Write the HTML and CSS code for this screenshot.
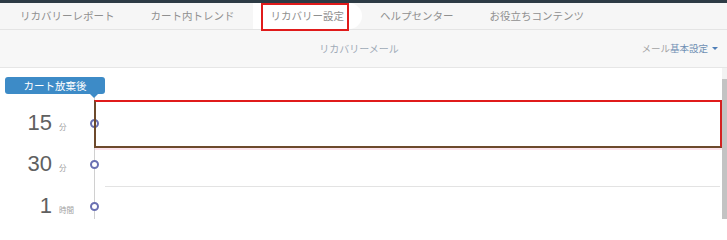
FILE: index.html
```html
<!DOCTYPE html>
<html lang="ja">
<head>
<meta charset="utf-8">
<title>リカバリー設定</title>
<link rel="stylesheet" href="styles.css">
</head>
<body>
<div class="topbar"></div>
<nav class="tabs">
  <a class="tab">リカバリーレポート</a>
  <a class="tab">カート内トレンド</a>
  <a class="tab active"><span class="mark"></span>リカバリー設定</a>
  <a class="tab">ヘルプセンター</a>
  <a class="tab">お役立ちコンテンツ</a>
</nav>
<div class="subbar">
  <div class="subtitle">リカバリーメール</div>
  <div class="settings"><span class="muted">メール</span>基本設定<span class="caret"></span></div>
</div>
<div class="content">
  <main class="main">
    <div class="badge">カート放棄後</div>
    <div class="rows">
      <div class="row r1">
        <div class="time"><span class="num">15</span><span class="unit">分</span></div>
        <div class="track"><span class="dot"></span></div>
        <div class="cell marked"></div>
      </div>
      <div class="row r2">
        <div class="time"><span class="num">30</span><span class="unit">分</span></div>
        <div class="track"><span class="dot"></span></div>
        <div class="cell lined"></div>
      </div>
      <div class="row r3">
        <div class="time"><span class="num">1</span><span class="unit">時間</span></div>
        <div class="track"><span class="dot"></span></div>
        <div class="cell"></div>
      </div>
    </div>
  </main>
  <div class="scrollbar"><div class="thumb"></div></div>
</div>
</body>
</html>
```

FILE: styles.css
```css
* { box-sizing: border-box; }
html, body { margin: 0; padding: 0; }
body {
  width: 727px;
  height: 219px;
  overflow: hidden;
  background: #ffffff;
  font-family: "Noto Sans CJK JP", "Noto Sans", sans-serif;
  font-size: 10.5px;
  color: #888888;
}

.topbar {
  height: 3px;
  background: #2d3b45;
}

.tabs {
  display: flex;
  align-items: stretch;
  height: 27px;
  padding-left: 2px;
  background: #f6f6f6;
  border-bottom: 1px solid #e4e4e4;
}
.tab {
  position: relative;
  display: flex;
  align-items: center;
  padding: 0 18px;
  color: #909090;
  white-space: nowrap;
  line-height: 1;
}
.tab.active {
  background: #ffffff;
  border-radius: 0 13px 13px 0;
}
.mark {
  position: absolute;
  left: 8px;
  top: 0;
  width: 88px;
  height: 28px;
  border: 2px solid #e01b1b;
}

.subbar {
  display: grid;
  grid-template-columns: 1fr auto 1fr;
  align-items: center;
  height: 38px;
  padding-right: 9px;
  background: #f7f7f7;
  border-bottom: 1px solid #e6e6e6;
}
.subtitle {
  grid-column: 2;
  font-size: 10px;
  color: #9fabb8;
  line-height: 1;
}
.settings {
  grid-column: 3;
  justify-self: end;
  display: flex;
  align-items: center;
  font-size: 9.5px;
  color: #6f8fb3;
  line-height: 1;
}
.muted { color: #a4a4a4; }
.caret {
  width: 0;
  height: 0;
  margin-left: 4px;
  border-left: 3px solid transparent;
  border-right: 3px solid transparent;
  border-top: 3px solid #4f7fb8;
}

.content {
  display: flex;
  height: 151px;
}
.main {
  flex: 1;
  min-width: 0;
}
.scrollbar {
  width: 5px;
  background: #f2f2f2;
  padding-top: 11px;
}
.thumb {
  height: 100%;
  background: #c3c3c3;
}

.badge {
  position: relative;
  width: 100px;
  height: 17px;
  margin: 9px 0 0 5px;
  background: #3d8bc7;
  border-radius: 3px;
  color: #ffffff;
  font-size: 10.5px;
  line-height: 17px;
  text-align: center;
}
.badge::after {
  content: "";
  position: absolute;
  left: 85px;
  bottom: -4px;
  border-left: 4px solid transparent;
  border-right: 4px solid transparent;
  border-top: 4px solid #3d8bc7;
}

.row {
  display: grid;
  grid-template-columns: 89px 10px 1fr;
  align-items: start;
}
.r1 { height: 54px; --cy: 29px; }
.r2 { height: 39px; --cy: 16px; }
.r3 { height: 32px; --cy: 19px; }

.time {
  display: flex;
  align-items: baseline;
  height: 20px;
  margin-top: calc(var(--cy) - 10px);
  line-height: 20px;
}
.num {
  width: 52px;
  text-align: right;
  font-family: "Liberation Sans Narrow", "Liberation Sans", sans-serif;
  font-size: 22px;
  color: #606060;
}
.unit {
  margin-left: 7px;
  font-size: 7.5px;
  color: #a0a0a0;
}

.track {
  align-self: stretch;
  background: linear-gradient(to right, transparent 4.5px, #d0d0d0 4.5px, #d0d0d0 5.5px, transparent 5.5px);
}
.dot {
  display: block;
  width: 9px;
  height: 9px;
  margin: calc(var(--cy) - 4.5px) 0 0 0.5px;
  border: 2px solid #6a70b2;
  border-radius: 50%;
  background: #ffffff;
}

.cell { align-self: stretch; }
.marked {
  height: 48px;
  margin-top: 6px;
  margin-left: -5px;
  border-top: 2px solid #e01b1b;
  border-right: 2px solid #d42222;
  border-bottom: 2px solid #6d4a2c;
  border-left: 2px solid #6d4a2c;
  box-shadow: 0 2px 0 #fde4ec;
}
.lined {
  margin-left: 6px;
  margin-right: 2px;
  border-bottom: 1px solid #e3e3e3;
}
```
